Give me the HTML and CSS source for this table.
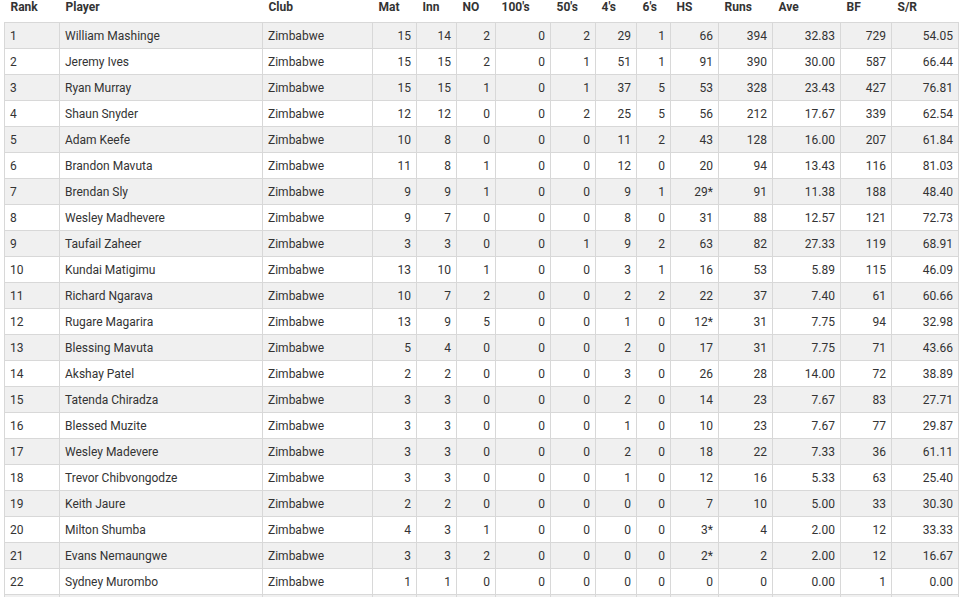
FILE: index.html
```html
<!DOCTYPE html>
<html>
<head>
<meta charset="utf-8">
<link rel="stylesheet" href="styles.css">
</head>
<body>
<div class="wrap">
<table class="stats">
<colgroup>
<col class="c-rank"><col class="c-player"><col class="c-club"><col class="c-mat"><col class="c-inn"><col class="c-no"><col class="c-100"><col class="c-50"><col class="c-4"><col class="c-6"><col class="c-hs"><col class="c-runs"><col class="c-ave"><col class="c-bf"><col class="c-sr">
</colgroup>
<thead>
<tr><th>Rank</th><th>Player</th><th>Club</th><th>Mat</th><th>Inn</th><th>NO</th><th>100's</th><th>50's</th><th>4's</th><th>6's</th><th>HS</th><th>Runs</th><th>Ave</th><th>BF</th><th>S/R</th></tr>
</thead>
<tbody>
<tr><td>1</td><td>William Mashinge</td><td>Zimbabwe</td><td class="n">15</td><td class="n">14</td><td class="n">2</td><td class="n">0</td><td class="n">2</td><td class="n">29</td><td class="n">1</td><td class="n">66</td><td class="n">394</td><td class="n">32.83</td><td class="n">729</td><td class="n">54.05</td></tr>
<tr><td>2</td><td>Jeremy Ives</td><td>Zimbabwe</td><td class="n">15</td><td class="n">15</td><td class="n">2</td><td class="n">0</td><td class="n">1</td><td class="n">51</td><td class="n">1</td><td class="n">91</td><td class="n">390</td><td class="n">30.00</td><td class="n">587</td><td class="n">66.44</td></tr>
<tr><td>3</td><td>Ryan Murray</td><td>Zimbabwe</td><td class="n">15</td><td class="n">15</td><td class="n">1</td><td class="n">0</td><td class="n">1</td><td class="n">37</td><td class="n">5</td><td class="n">53</td><td class="n">328</td><td class="n">23.43</td><td class="n">427</td><td class="n">76.81</td></tr>
<tr><td>4</td><td>Shaun Snyder</td><td>Zimbabwe</td><td class="n">12</td><td class="n">12</td><td class="n">0</td><td class="n">0</td><td class="n">2</td><td class="n">25</td><td class="n">5</td><td class="n">56</td><td class="n">212</td><td class="n">17.67</td><td class="n">339</td><td class="n">62.54</td></tr>
<tr><td>5</td><td>Adam Keefe</td><td>Zimbabwe</td><td class="n">10</td><td class="n">8</td><td class="n">0</td><td class="n">0</td><td class="n">0</td><td class="n">11</td><td class="n">2</td><td class="n">43</td><td class="n">128</td><td class="n">16.00</td><td class="n">207</td><td class="n">61.84</td></tr>
<tr><td>6</td><td>Brandon Mavuta</td><td>Zimbabwe</td><td class="n">11</td><td class="n">8</td><td class="n">1</td><td class="n">0</td><td class="n">0</td><td class="n">12</td><td class="n">0</td><td class="n">20</td><td class="n">94</td><td class="n">13.43</td><td class="n">116</td><td class="n">81.03</td></tr>
<tr><td>7</td><td>Brendan Sly</td><td>Zimbabwe</td><td class="n">9</td><td class="n">9</td><td class="n">1</td><td class="n">0</td><td class="n">0</td><td class="n">9</td><td class="n">1</td><td class="n">29*</td><td class="n">91</td><td class="n">11.38</td><td class="n">188</td><td class="n">48.40</td></tr>
<tr><td>8</td><td>Wesley Madhevere</td><td>Zimbabwe</td><td class="n">9</td><td class="n">7</td><td class="n">0</td><td class="n">0</td><td class="n">0</td><td class="n">8</td><td class="n">0</td><td class="n">31</td><td class="n">88</td><td class="n">12.57</td><td class="n">121</td><td class="n">72.73</td></tr>
<tr><td>9</td><td>Taufail Zaheer</td><td>Zimbabwe</td><td class="n">3</td><td class="n">3</td><td class="n">0</td><td class="n">0</td><td class="n">1</td><td class="n">9</td><td class="n">2</td><td class="n">63</td><td class="n">82</td><td class="n">27.33</td><td class="n">119</td><td class="n">68.91</td></tr>
<tr><td>10</td><td>Kundai Matigimu</td><td>Zimbabwe</td><td class="n">13</td><td class="n">10</td><td class="n">1</td><td class="n">0</td><td class="n">0</td><td class="n">3</td><td class="n">1</td><td class="n">16</td><td class="n">53</td><td class="n">5.89</td><td class="n">115</td><td class="n">46.09</td></tr>
<tr><td>11</td><td>Richard Ngarava</td><td>Zimbabwe</td><td class="n">10</td><td class="n">7</td><td class="n">2</td><td class="n">0</td><td class="n">0</td><td class="n">2</td><td class="n">2</td><td class="n">22</td><td class="n">37</td><td class="n">7.40</td><td class="n">61</td><td class="n">60.66</td></tr>
<tr><td>12</td><td>Rugare Magarira</td><td>Zimbabwe</td><td class="n">13</td><td class="n">9</td><td class="n">5</td><td class="n">0</td><td class="n">0</td><td class="n">1</td><td class="n">0</td><td class="n">12*</td><td class="n">31</td><td class="n">7.75</td><td class="n">94</td><td class="n">32.98</td></tr>
<tr><td>13</td><td>Blessing Mavuta</td><td>Zimbabwe</td><td class="n">5</td><td class="n">4</td><td class="n">0</td><td class="n">0</td><td class="n">0</td><td class="n">2</td><td class="n">0</td><td class="n">17</td><td class="n">31</td><td class="n">7.75</td><td class="n">71</td><td class="n">43.66</td></tr>
<tr><td>14</td><td>Akshay Patel</td><td>Zimbabwe</td><td class="n">2</td><td class="n">2</td><td class="n">0</td><td class="n">0</td><td class="n">0</td><td class="n">3</td><td class="n">0</td><td class="n">26</td><td class="n">28</td><td class="n">14.00</td><td class="n">72</td><td class="n">38.89</td></tr>
<tr><td>15</td><td>Tatenda Chiradza</td><td>Zimbabwe</td><td class="n">3</td><td class="n">3</td><td class="n">0</td><td class="n">0</td><td class="n">0</td><td class="n">2</td><td class="n">0</td><td class="n">14</td><td class="n">23</td><td class="n">7.67</td><td class="n">83</td><td class="n">27.71</td></tr>
<tr><td>16</td><td>Blessed Muzite</td><td>Zimbabwe</td><td class="n">3</td><td class="n">3</td><td class="n">0</td><td class="n">0</td><td class="n">0</td><td class="n">1</td><td class="n">0</td><td class="n">10</td><td class="n">23</td><td class="n">7.67</td><td class="n">77</td><td class="n">29.87</td></tr>
<tr><td>17</td><td>Wesley Madevere</td><td>Zimbabwe</td><td class="n">3</td><td class="n">3</td><td class="n">0</td><td class="n">0</td><td class="n">0</td><td class="n">2</td><td class="n">0</td><td class="n">18</td><td class="n">22</td><td class="n">7.33</td><td class="n">36</td><td class="n">61.11</td></tr>
<tr><td>18</td><td>Trevor Chibvongodze</td><td>Zimbabwe</td><td class="n">3</td><td class="n">3</td><td class="n">0</td><td class="n">0</td><td class="n">0</td><td class="n">1</td><td class="n">0</td><td class="n">12</td><td class="n">16</td><td class="n">5.33</td><td class="n">63</td><td class="n">25.40</td></tr>
<tr><td>19</td><td>Keith Jaure</td><td>Zimbabwe</td><td class="n">2</td><td class="n">2</td><td class="n">0</td><td class="n">0</td><td class="n">0</td><td class="n">0</td><td class="n">0</td><td class="n">7</td><td class="n">10</td><td class="n">5.00</td><td class="n">33</td><td class="n">30.30</td></tr>
<tr><td>20</td><td>Milton Shumba</td><td>Zimbabwe</td><td class="n">4</td><td class="n">3</td><td class="n">1</td><td class="n">0</td><td class="n">0</td><td class="n">0</td><td class="n">0</td><td class="n">3*</td><td class="n">4</td><td class="n">2.00</td><td class="n">12</td><td class="n">33.33</td></tr>
<tr><td>21</td><td>Evans Nemaungwe</td><td>Zimbabwe</td><td class="n">3</td><td class="n">3</td><td class="n">2</td><td class="n">0</td><td class="n">0</td><td class="n">0</td><td class="n">0</td><td class="n">2*</td><td class="n">2</td><td class="n">2.00</td><td class="n">12</td><td class="n">16.67</td></tr>
<tr><td>22</td><td>Sydney Murombo</td><td>Zimbabwe</td><td class="n">1</td><td class="n">1</td><td class="n">0</td><td class="n">0</td><td class="n">0</td><td class="n">0</td><td class="n">0</td><td class="n">0</td><td class="n">0</td><td class="n">0.00</td><td class="n">1</td><td class="n">0.00</td></tr>
<tr><td>&nbsp;</td><td>&nbsp;</td><td>&nbsp;</td><td>&nbsp;</td><td>&nbsp;</td><td>&nbsp;</td><td>&nbsp;</td><td>&nbsp;</td><td>&nbsp;</td><td>&nbsp;</td><td>&nbsp;</td><td>&nbsp;</td><td>&nbsp;</td><td>&nbsp;</td><td>&nbsp;</td></tr>
</tbody>
</table>
</div>
</body>
</html>
```
FILE: styles.css
```css
html, body {
  margin: 0;
  padding: 0;
  background: #ffffff;
}
body {
  font-family: Roboto, "Liberation Sans", Arial, sans-serif;
  font-size: 12px;
  color: #333333;
}
.wrap {
  padding-left: 4px;
}
.stats {
  border-collapse: collapse;
  table-layout: fixed;
  width: 954px;
}
.c-rank { width: 55px; }
.c-player { width: 203px; }
.c-club { width: 110px; }
.c-mat { width: 44px; }
.c-inn { width: 40px; }
.c-no { width: 39px; }
.c-100 { width: 55px; }
.c-50 { width: 45px; }
.c-4 { width: 41px; }
.c-6 { width: 34px; }
.c-hs { width: 48px; }
.c-runs { width: 54px; }
.c-ave { width: 68px; }
.c-bf { width: 51px; }
.c-sr { width: 67px; }
.stats th {
  text-align: left;
  font-weight: 700;
  vertical-align: top;
  height: 22px;
  line-height: 14px;
  padding: 0 6px;
  box-sizing: border-box;
  white-space: nowrap;
}
.stats td {
  border: 1px solid #d8d8d8;
  height: 23px;
  line-height: 14px;
  padding: 2px 5px 0 5px;
  white-space: nowrap;
  overflow: hidden;
}
.stats td.n {
  text-align: right;
}
.stats tbody tr:nth-child(odd) td {
  background: #f0f0f0;
}
```
